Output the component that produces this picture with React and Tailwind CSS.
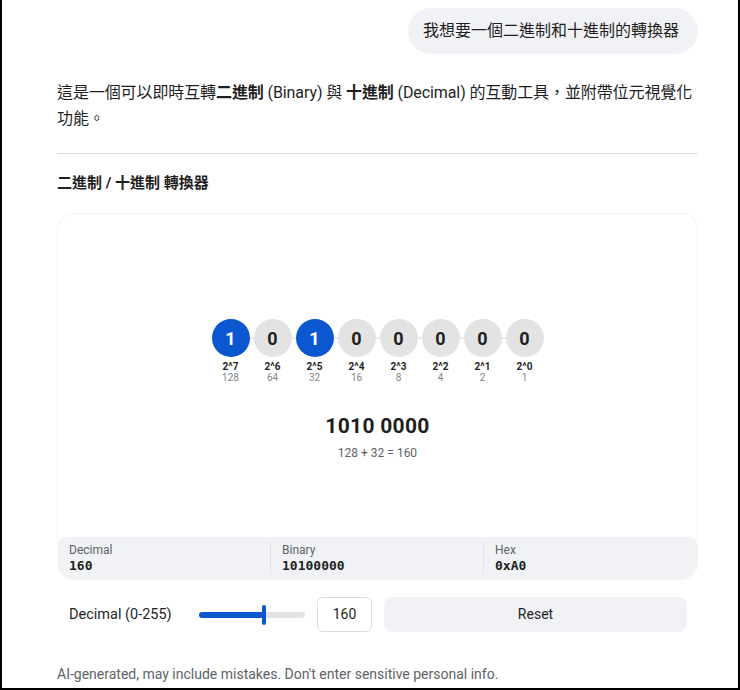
import React from "react";

const bits = [
  { p: 7, v: 128, on: true },
  { p: 6, v: 64, on: false },
  { p: 5, v: 32, on: true },
  { p: 4, v: 16, on: false },
  { p: 3, v: 8, on: false },
  { p: 2, v: 4, on: false },
  { p: 1, v: 2, on: false },
  { p: 0, v: 1, on: false },
];

const sans = { fontFamily: 'Roboto, "Noto Sans CJK TC", sans-serif' };

const App = () => {
  return (
    <div
      className="h-[690px] w-[740px] overflow-hidden border-x-2 border-b-2 border-black bg-white text-[#1f1f1f]"
      style={sans}
    >
      <div className="pl-[55px] pr-[40px]">
        {/* 使用者訊息 */}
        <div className="flex justify-end pt-[8px]">
          <div className="h-[46px] w-[290px] rounded-[23px] bg-[#f0f2f5] pl-[15px] text-[16px] leading-[46px]">
            我想要一個二進制和十進制的轉換器
          </div>
        </div>

        <p className="mt-[26px] text-[16px] leading-[26px] tracking-[-0.1px]">
          這是一個可以即時互轉<b>二進制</b> (Binary) 與 <b>十進制</b> (Decimal) 的互動工具，並附帶位元視覺化功能。
        </p>

        <div className="mt-[21px] h-px bg-[#dadce0]" />

        <h3 className="mt-[18px] text-[15px] font-bold leading-[22px]">二進制 / 十進制 轉換器</h3>

        {/* 轉換卡片 */}
        <div className="mt-[19px] rounded-[16px] border border-[#f1f3f4] bg-white">
          <div className="flex h-[323px] flex-col items-center pt-[105px]">
            <div className="relative flex gap-[4px]">
              <div className="absolute left-[19px] right-[19px] top-[18px] h-[2px] bg-[#e8eaed]" />
              {bits.map((b) => (
                <div key={b.p} className="relative flex w-[38px] flex-col items-center">
                  <div
                    className={
                      b.on
                        ? "flex h-[38px] w-[38px] items-center justify-center rounded-full bg-[#0b57d0] text-[18px] font-bold text-white"
                        : "flex h-[38px] w-[38px] items-center justify-center rounded-full bg-[#e3e3e3] text-[18px] font-bold text-[#1f1f1f]"
                    }
                  >
                    {b.on ? 1 : 0}
                  </div>
                  <div className="mt-[4px] text-[10px] font-bold leading-[11px]">2^{b.p}</div>
                  <div className="text-[10px] leading-[11px] text-[#80868b]">{b.v}</div>
                </div>
              ))}
            </div>
            <div className="mt-[30px] text-[21px] font-bold leading-[26px] tracking-[0.3px]">1010 0000</div>
            <div className="mt-[6px] text-[12px] leading-[16px] text-[#5f6368]">128 + 32 = 160</div>
          </div>

          <div className="grid h-[42px] grid-cols-3 rounded-b-[16px] rounded-t-[8px] bg-[#f0f2f5]">
            {[
              ["Decimal", "160"],
              ["Binary", "10100000"],
              ["Hex", "0xA0"],
            ].map(([k, v], i) => (
              <div
                key={k}
                className={
                  i < 2
                    ? "my-[5px] border-r border-[#e0e2e6] pl-[11px] pt-[1px]"
                    : "my-[5px] pl-[11px] pt-[1px]"
                }
              >
                <div className="text-[12px] leading-[15px] text-[#5f6368]">{k}</div>
                <div
                  className="text-[13px] font-bold leading-[16px]"
                  style={{ fontFamily: '"DejaVu Sans Mono", monospace' }}
                >
                  {v}
                </div>
              </div>
            ))}
          </div>
        </div>

        {/* 控制列 */}
        <div className="mt-[17px] flex items-center pl-[12px] pr-[11px]">
          <div className="w-[130px] text-[14.5px]">Decimal (0-255)</div>
          <div className="relative h-[6px] w-[106px] rounded-full bg-[#e3e3e3]">
            <div className="absolute left-0 top-0 h-[6px] w-[65px] rounded-full bg-[#0b57d0]" />
            <div className="absolute left-[63px] top-[-7px] h-[20px] w-[4px] rounded-full bg-[#0b57d0]" />
          </div>
          <div className="ml-[12px] flex h-[35px] w-[55px] items-center justify-center rounded-[6px] border border-[#dadce0] text-[14px]">
            160
          </div>
          <div className="ml-[12px] flex h-[35px] flex-1 items-center justify-center rounded-[8px] bg-[#f0f2f5] text-[14px]">
            Reset
          </div>
        </div>

        <div className="mt-[32px] text-[14px] text-[#5f6368]">
          AI-generated, may include mistakes. Don't enter sensitive personal info.
        </div>
      </div>
    </div>
  );
};

export default App;
